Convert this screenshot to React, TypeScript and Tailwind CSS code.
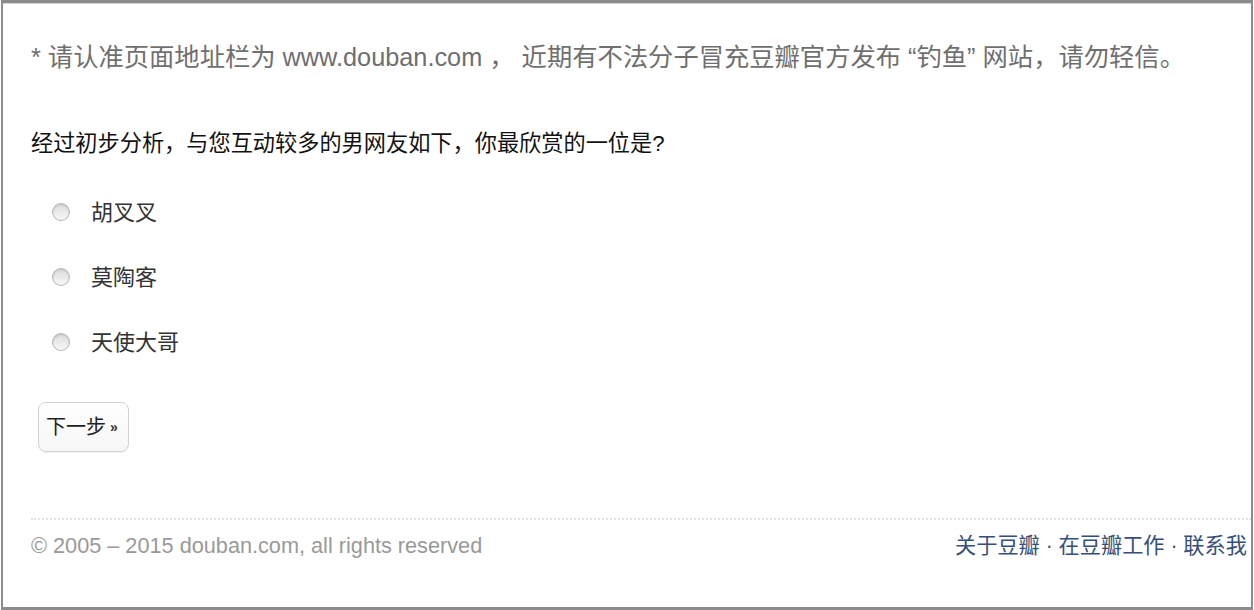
import React from "react"

const font = { fontFamily: '"Liberation Sans", Arial, "Noto Sans CJK SC", sans-serif' }

const options = ["胡叉叉", "莫陶客", "天使大哥"]

export default function App() {
  return (
    <div className="w-[1254px] h-[610px] bg-white overflow-hidden" style={font}>
      <div className="ml-px mr-px h-[610px] border-t-[3px] border-b-[3px] border-l-2 border-r-2 border-[#8c8c8c] overflow-hidden">
        <div className="border-t border-[#d6d6d6] h-full pl-[28px] pt-[38px]">
          <p className="text-[25.3px] leading-[30px] text-[#6f6f6f] whitespace-nowrap">
            * 请认准页面地址栏为 www.douban.com ， 近期有不法分子冒充豆瓣官方发布 “钓鱼” 网站，请勿轻信。
          </p>

          <p className="mt-[57px] text-[22.2px] leading-[30px] text-[#111] whitespace-nowrap">
            经过初步分析，与您互动较多的男网友如下，你最欣赏的一位是?
          </p>

          <div className="mt-[38px] flex flex-col gap-[35px]">
            {options.map((name) => (
              <label key={name} className="flex items-center h-[30px]">
                <span className="ml-[21px] w-[18px] h-[18px] rounded-full border border-[#b9b9b9] bg-linear-to-b from-[#dcdcdc] to-[#f7f7f7] shadow-[inset_0_1px_2px_rgba(0,0,0,0.15)]" />
                <span className="ml-[21px] text-[22px] text-[#333]">{name}</span>
              </label>
            ))}
          </div>

          <button className="mt-[45px] ml-[7px] w-[91px] h-[50px] rounded-[8px] border border-[#d2d2d2] bg-linear-to-b from-white to-[#f6f6f6] flex items-center pl-[7px] shadow-[0_1px_1px_rgba(0,0,0,0.06)]">
            <span className="text-[20px] text-[#222]">下一步</span>
            <span className="ml-[4px] text-[14px] text-[#333] font-bold">»</span>
          </button>

          <div className="mt-[66px] border-t-2 border-dotted border-[#e2e2e2]" />

          <div className="mt-[11px] flex items-center h-[30px] whitespace-nowrap">
            <span className="w-[924px] shrink-0 text-[21.7px] text-[#999]">
              © 2005 – 2015 douban.com, all rights reserved
            </span>
            <span className="text-[21.2px] text-[#34507a]">关于豆瓣 · 在豆瓣工作 · 联系我</span>
          </div>
        </div>
      </div>
    </div>
  )
}
